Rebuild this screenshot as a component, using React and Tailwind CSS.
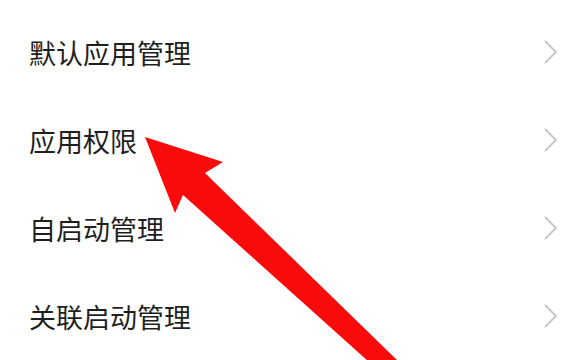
import React from "react";

// Settings list with a red pointer arrow drawn over it
const items = ["默认应用管理", "应用权限", "自启动管理", "关联启动管理"];

function Chevron() {
  return (
    <svg width="16" height="26" viewBox="0 0 16 26" fill="none">
      <polyline points="3,2 14,13 3,24" stroke="#c6c6c6" strokeWidth="2" strokeLinejoin="miter" />
    </svg>
  );
}

export default function App() {
  return (
    <div
      className="relative w-[582px] h-[360px] overflow-hidden bg-white"
      style={{ fontFamily: '"Noto Sans CJK SC", "Noto Sans", sans-serif' }}
    >
      <ul className="pt-[8px]">
        {items.map((label) => (
          <li key={label} className="flex items-center justify-between h-[88px] pl-[29px] pr-[24px]">
            <span className="text-[27px] leading-none text-[#1f1f1f]">{label}</span>
            <Chevron />
          </li>
        ))}
      </ul>

      {/* annotation arrow */}
      <svg className="absolute inset-0 pointer-events-none" width="582" height="360" viewBox="0 0 582 360">
        <polygon
          points="145,137 223,162 205,173 399,362 369,362 183,195 175,213"
          fill="#fa0b0b"
        />
      </svg>
    </div>
  );
}
